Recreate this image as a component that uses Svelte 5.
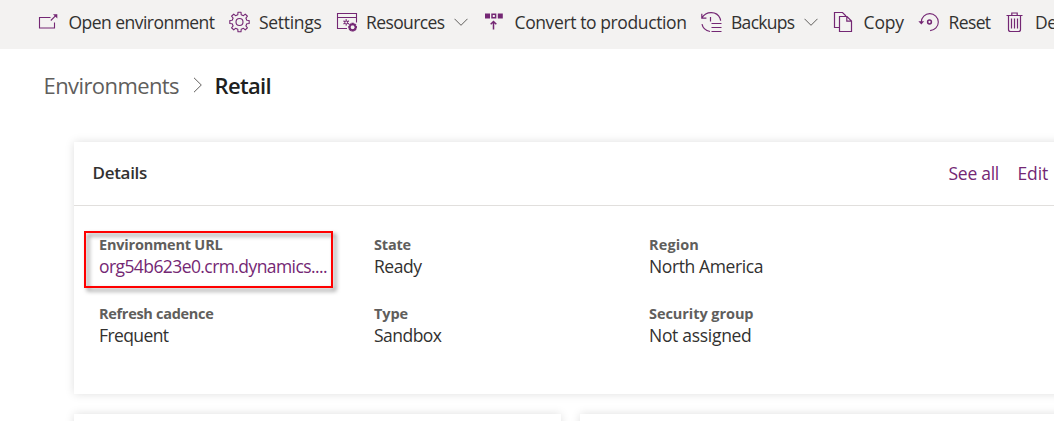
<script>
  const commands = [
    { icon: 'open', label: 'Open environment', width: 146 },
    { icon: 'gear', label: 'Settings', width: 62.5 },
    { icon: 'resources', label: 'Resources', width: 78.5, menu: true },
    { icon: 'convert', label: 'Convert to production', width: 172 },
    { icon: 'backup', label: 'Backups', width: 63.5, menu: true },
    { icon: 'copy', label: 'Copy', width: 40.5 },
    { icon: 'reset', label: 'Reset', width: 42 },
    { icon: 'trash', label: 'Delete', width: 50 }
  ];

  const fields = [
    { name: 'Environment URL', nameWidth: 123.5, value: 'org54b623e0.crm.dynamics....', width: 228, link: true },
    { name: 'State', nameWidth: 37, value: 'Ready', width: 47.5 },
    { name: 'Region', nameWidth: 50, value: 'North America', width: 114 },
    { name: 'Refresh cadence', nameWidth: 114.5, value: 'Frequent', width: 69.5 },
    { name: 'Type', nameWidth: 34, value: 'Sandbox', width: 67.5 },
    { name: 'Security group', nameWidth: 104.5, value: 'Not assigned', width: 102.5 }
  ];

  // Tracks the text so that it fills the given width.
  function fit(node, width) {
    node.style.letterSpacing = '0px';
    const natural = node.getBoundingClientRect().width;
    node.style.letterSpacing = (width - natural) / node.textContent.length + 'px';
  }

  // Outline of a toothed cog centred on (cx, cy).
  function cog(cx, cy, outer, inner, teeth = 8) {
    const points = [];
    const step = (Math.PI * 2) / teeth;
    for (let i = 0; i < teeth; i++) {
      const a = i * step - Math.PI / 2;
      for (const [t, r] of [[-0.29, inner], [-0.2, outer], [0.2, outer], [0.29, inner]]) {
        points.push(`${(cx + r * Math.cos(a + t * step)).toFixed(2)},${(cy + r * Math.sin(a + t * step)).toFixed(2)}`);
      }
    }
    return points.join(' ');
  }
</script>

<div class="page">
  <nav class="toolbar">
    {#each commands as c}
      <div class="command">
        <svg class="icon" width="22" height="22" viewBox="0 0 22 22">
          {#if c.icon === 'open'}
            <path d="M12.500 6.500H1.500v10.500h15v-5.500M12.800 9.500l5.700-5.700" />
            <path class="fill" d="M15 3.200h4.300v4.300z" />
          {:else if c.icon === 'gear'}
            <polygon points={cog(10.5, 11, 9.8, 7.5)} stroke-linejoin="round" />
            <circle cx="10.5" cy="11" r="3.5" />
          {:else if c.icon === 'resources'}
            <path d="M11 17.500H1.500v-15h19v9M1.500 6.500h19" />
            <polygon class="fill" points={cog(10.2, 11.4, 3.2, 1.8, 6)} />
            <circle class="hole" cx="10.2" cy="11.4" r="1" />
            <polygon stroke-width="1.4" points={cog(16.6, 16.2, 3.7, 2.6)} />
            <circle class="hole" cx="16.6" cy="16.2" r="1.5" />
          {:else if c.icon === 'convert'}
            <path class="fill" d="M1 2.500h5v5H1zM13.800 2.500h5v5h-5z" />
            <path stroke-width="1.5" d="M8 3.200h3.600v3.600H8zM9.500 18.500v-7.800M6.700 13.300l2.800-2.800 2.800 2.800" />
          {:else if c.icon === 'backup'}
            <path stroke-width="1.2" d="M1 6.800C4.800-.2 16-.4 19 7.300q.5 1.300.6 2.500M.8 2.800v4.300h4.600M1 13.200Q2.200 19.200 9 20.500M9.500 6v4.500M10.500 12.500h10M10.500 16.500h10M10.500 20.500h10" />
          {:else if c.icon === 'copy'}
            <path stroke-width="1.2" d="M6 16.500H1.500v-15h8l3.500 3.500M6.500 5.500h7.500l4.500 4.500v10.500h-12zM13.800 5.500v4.700h4.700" />
          {:else if c.icon === 'reset'}
            <path d="M3.300 11a8.500 8.500 0 1 1 8.800 8.600" />
            <path class="fill" d="M.4 10.200h5.800L3.300 13.400z" />
            <circle cx="11.500" cy="11" r="1.900" stroke-width="1.500" />
          {:else}
            <path stroke-width="1.2" d="M1.500 4.500h16M6.800 4.500v-2.500h5.400v2.500M3.500 4.500v14q0 2 2 2h8q2 0 2-2v-14M6.500 7.500v10M9.500 7.500v10M12.500 7.500v10" />
          {/if}
        </svg>
        <span class="slot" style="width: {c.width}px"><span use:fit={c.width}>{c.label}</span></span>
        {#if c.menu}
          <svg class="chevron" width="14" height="9" viewBox="0 0 14 9"><path d="M.5.800L7 7.300 13.500.800" /></svg>
        {/if}
      </div>
    {/each}
  </nav>

  <div class="crumbs">
    <span class="parent"><span use:fit={135.5}>Environments</span></span>
    <svg width="10" height="16" viewBox="0 0 10 16"><path d="M1 .8L8.300 8 1 15.200" /></svg>
    <strong><span use:fit={56.5}>Retail</span></strong>
  </div>

  <main>
    <section class="card details">
      <header>
        <h2><span use:fit={54.5}>Details</span></h2>
        <a href="#all"><span use:fit={50.5}>See all</span></a>
        <a href="#edit"><span use:fit={30.5}>Edit</span></a>
      </header>
      <div class="fields">
        {#each fields as f}
          <div class="field">
            <div class="name"><span use:fit={f.nameWidth}>{f.name}</span></div>
            <div class="value" class:link={f.link}><span use:fit={f.width}>{f.value}</span></div>
            {#if f.link}<div class="highlight"></div>{/if}
          </div>
        {/each}
      </div>
    </section>
    <div class="lower">
      <section class="card"></section>
      <section class="card"></section>
    </div>
  </main>
</div>

<style>
  :global(body) { margin: 0; background: #fff; overflow: hidden; }
  .page { width: 1054px; height: 421px; overflow: hidden; font-family: "Open Sans", "Noto Sans", sans-serif; color: #323130; white-space: nowrap; }
  .toolbar { display: flex; gap: 14px; height: 49px; padding-left: 38px; background: #f3f2f1; font-size: 17.5px; }
  .command { display: flex; flex: none; height: 44px; align-items: center; }
  .slot { flex: none; margin-left: 8.5px; line-height: 24px; }
  .slot > span, .crumbs span span, .crumbs strong span, h2 span, a span, .name span, .value span { display: inline-block; }
  .icon { flex: none; fill: none; stroke: #742774; stroke-width: 1.1; }
  .icon .fill { fill: #742774; stroke: none; }
  .icon .hole { fill: #f3f2f1; stroke: none; }
  .chevron { fill: none; stroke: #605e5c; stroke-width: 1; margin: 0 2px 0 9.5px; }
  .command:nth-child(n + 5) .chevron { margin-right: 1px; }
  .crumbs { display: flex; align-items: center; height: 30px; padding: 21px 0 1px 43.5px; font-size: 22px; line-height: 30px; }
  .parent { width: 136px; color: #605e5c; }
  .crumbs svg { fill: none; stroke: #605e5c; margin: 0 12px 0 13px; }
  .crumbs strong { font-weight: 600; color: #201f1e; }
  main { padding: 41px 0 0 74px; width: 1020px; }
  .card { background: #fff; box-shadow: 0 0 9px rgba(0, 0, 0, .13); }
  .details { height: 252px; }
  header { display: flex; align-items: center; box-sizing: border-box; height: 64px; padding: 0 0 2px 18.5px; border-bottom: 1px solid #e1dfdd; font-size: 17.5px; }
  h2 { width: 856px; margin: 0; font-size: 17px; font-weight: 600; }
  a { color: #742774; text-decoration: none; width: 69px; }
  .fields { display: grid; grid-template-columns: repeat(3, 275px); grid-auto-rows: 69px; padding: 28px 0 0 25px; }
  .field { position: relative; }
  .name { font-size: 14.5px; line-height: 22px; font-weight: 700; color: #605e5c; }
  .value { font-size: 17.5px; line-height: 23px; margin-top: -1px; }
  .link { color: #742774; }
  .highlight { position: absolute; left: -15px; top: -3px; width: 245px; height: 53px; border: 2px solid #f00; filter: drop-shadow(3px 3px 2px rgba(0, 0, 0, .5)); }
  .lower { display: grid; grid-template-columns: 487px 1fr; gap: 19px; padding-top: 20px; }
  .lower .card { height: 60px; }
</style>
